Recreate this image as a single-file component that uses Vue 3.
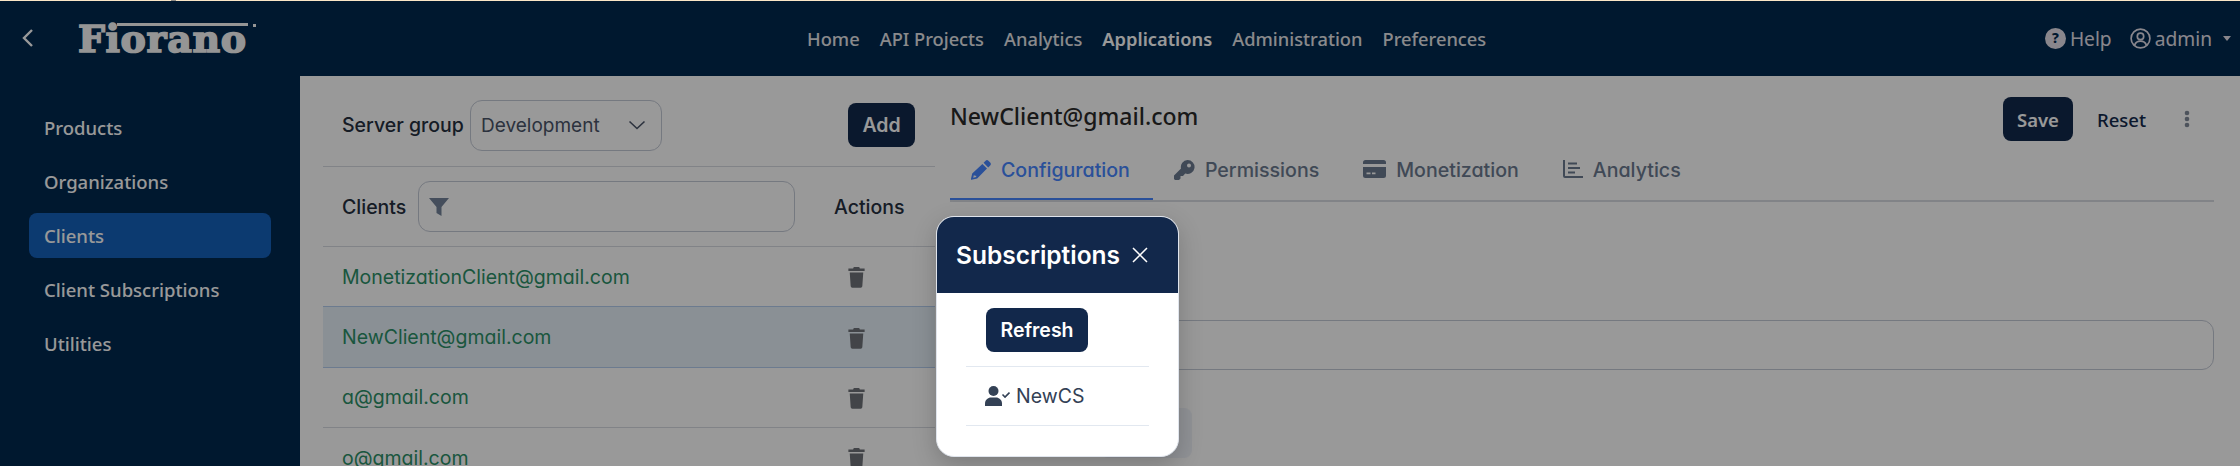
<script setup>
const navLinks = [
  { label: "Home" },
  { label: "API Projects" },
  { label: "Analytics" },
  { label: "Applications", active: true },
  { label: "Administration" },
  { label: "Preferences" }
];

const sideLinks = [
  { label: "Products" },
  { label: "Organizations" },
  { label: "Clients", active: true },
  { label: "Client Subscriptions" },
  { label: "Utilities" }
];

const clients = [
  { email: "MonetizationClient@gmail.com" },
  { email: "NewClient@gmail.com", selected: true },
  { email: "a@gmail.com" },
  { email: "o@gmail.com" }
];

const trashPath = "M5 1.500h4l.5 1H13v2H1v-2h3.500zM2 5.500h10l-.7 10.200a1.200 1.200 0 0 1-1.200 1.100H3.900a1.200 1.200 0 0 1-1.200-1.100z";
</script>

<template>
  <div class="page">
    <div class="top-line"><i></i></div>
    <header class="topbar">
      <button type="button" class="back">
        <svg width="14" height="22" viewBox="0 0 14 22"><path d="M11 3 3 11l8 8" fill="none" stroke="currentColor" stroke-width="2.400" /></svg>
      </button>
      <div class="logo"><span>Fiorano</span><i></i><b></b></div>
      <nav class="nav">
        <a v-for="link in navLinks" :key="link.label" :class="{ active: link.active }">{{ link.label }}</a>
      </nav>
      <div class="user">
        <span class="user-item">
          <svg width="21" height="21" viewBox="0 0 21 21"><circle cx="10.500" cy="10.500" r="10.500" fill="currentColor" /><text x="10.500" y="15" text-anchor="middle" class="q">?</text></svg>
          Help
        </span>
        <span class="user-item admin">
          <svg width="21" height="21" viewBox="0 0 21 21" fill="none" stroke="currentColor" stroke-width="1.700"><circle cx="10.500" cy="10.500" r="9.400" /><circle cx="10.500" cy="8.400" r="3.200" /><path d="M4.600 17.200c1-3 3.200-4 5.900-4s4.900 1 5.900 4" /></svg>
          admin
          <i class="caret"></i>
        </span>
      </div>
    </header>

    <div class="body">
      <aside class="sidebar">
        <a v-for="link in sideLinks" :key="link.label" :class="{ active: link.active }">{{ link.label }}</a>
      </aside>

      <main class="main">
        <section class="clients">
          <div class="group-row">
            <label>Server group</label>
            <div class="select">
              Development
              <svg width="18" height="10" viewBox="0 0 18 10"><path d="m1.500 1.500 7.500 7 7.500-7" fill="none" stroke="currentColor" stroke-width="1.600" /></svg>
            </div>
            <button type="button" class="btn add">Add</button>
          </div>
          <div class="head-row">
            <label>Clients</label>
            <div class="filter">
              <svg width="20" height="18" viewBox="0 0 20 18"><path d="M0 0h20l-7.500 9v9l-5-3V9z" fill="currentColor" /></svg>
            </div>
            <span class="actions">Actions</span>
          </div>
          <div
            v-for="client in clients"
            :key="client.email"
            class="client-row"
            :class="{ selected: client.selected }"
          >
            <span>{{ client.email }}</span>
            <svg width="21" height="23" viewBox="0 0 14 17"><path :d="trashPath" fill="currentColor" /></svg>
          </div>
        </section>

        <section class="detail">
          <div class="detail-head">
            <h2>NewClient@gmail.com</h2>
            <div class="detail-actions">
              <button type="button" class="btn save">Save</button>
              <button type="button" class="reset">Reset</button>
              <svg width="6" height="18" viewBox="0 0 6 18"><circle cx="3" cy="3" r="2.300" /><circle cx="3" cy="9" r="2.300" /><circle cx="3" cy="15" r="2.300" /></svg>
            </div>
          </div>
          <div class="tabs">
            <a class="tab active">
              <svg width="20" height="20" viewBox="0 0 20 20"><path fill-rule="evenodd" d="M14.600.8a2 2 0 0 1 2.800 0l1.800 1.800a2 2 0 0 1 0 2.800l-2 2L12.600 2.800zM11.400 4l4.600 4.600-9.800 9.800-5.700 1.300a.5.500 0 0 1-.6-.6l1.300-5.700zM3 14.800l-.8 3 3-.8v-1.200H3.600z" fill="currentColor" /></svg>
              Configuration
            </a>
            <a class="tab">
              <svg width="21" height="20" viewBox="0 0 21 20"><path fill-rule="evenodd" d="M13.500 0a7 7 0 1 1-2.300 13.600L9 16H6.500v2.500L5 20H1l-1-1v-3.500l7-7A7 7 0 0 1 13.500 0zm1.500 3.500a2 2 0 1 0 0 4 2 2 0 0 0 0-4z" fill="currentColor" /></svg>
              Permissions
            </a>
            <a class="tab">
              <svg width="23" height="18" viewBox="0 0 23 18"><path fill-rule="evenodd" d="M2.500 0h18A2.500 2.500 0 0 1 23 2.500V4H0V2.500A2.500 2.500 0 0 1 2.500 0zM0 7h23v8.500a2.500 2.500 0 0 1-2.500 2.500h-18A2.500 2.500 0 0 1 0 15.500zm3.500 5.500v1.700h4v-1.700zm5.500 0v1.700h3.500v-1.700z" fill="currentColor" /></svg>
              Monetization
            </a>
            <a class="tab">
              <svg width="20" height="18" viewBox="0 0 20 18"><path d="M0 0h2v16h18v2H2a2 2 0 0 1-2-2zM5 2.500h9v2H5zm0 4.500h12v2H5zm0 4.500h7v2H5z" fill="currentColor" /></svg>
              Analytics
            </a>
          </div>
          <div class="field"></div>
        </section>
      </main>
    </div>

    <div class="backdrop">
      <div class="ghost-box"></div>
      <div class="modal">
        <div class="modal-head">
          <span>Subscriptions</span>
          <svg width="16" height="16" viewBox="0 0 16 16"><path d="m1 1 14 14M15 1 1 15" stroke="currentColor" stroke-width="1.500" fill="none" /></svg>
        </div>
        <div class="modal-body">
          <div class="modal-row refresh-row">
            <button type="button" class="refresh">Refresh</button>
          </div>
          <div class="modal-row sub-row">
            <svg width="25" height="20" viewBox="0 0 25 20"><circle cx="8.500" cy="5" r="5" fill="currentColor" /><path d="M0 20v-2.500C0 14 3 11.500 6 11.500h5c3 0 6 2.500 6 6V20z" fill="currentColor" /><path d="m17.500 8.500 2.500 2.500 4.500-4.500" fill="none" stroke="currentColor" stroke-width="1.600" /></svg>
            <span>NewCS</span>
          </div>
        </div>
      </div>
    </div>
  </div>
</template>

<style>
html,
body {
  margin: 0;
  background: #fff;
}
</style>

<style scoped>
.page {
  position: relative;
  width: 2240px;
  height: 466px;
  overflow: hidden;
  display: flex;
  flex-direction: column;
  font-family: Inter, "Noto Sans", sans-serif;
  color: #26303f;
}

.top-line {
  position: absolute;
  top: 0;
  left: 0;
  right: 0;
  height: 1px;
  background: #fbe6c6;
  z-index: 30;
}

.top-line i {
  position: absolute;
  left: 171px;
  width: 5px;
  height: 1px;
  background: #8f8a84;
}

.topbar {
  flex: 0 0 76px;
  display: flex;
  align-items: center;
  background: #00284f;
  color: #e6e6ea;
  position: relative;
}

.back {
  background: none;
  border: 0;
  color: #fff;
  padding: 0;
  margin-left: 21px;
  display: flex;
}

.logo {
  margin-left: 43px;
  position: relative;
  width: 174px;
  height: 30px;
  color: #f8f8f8;
  font-family: "DejaVu Serif", serif;
  font-weight: 700;
  font-size: 38px;
  line-height: 30px;
  letter-spacing: 0.6px;
}

.logo span {
  display: block;
  margin-top: 1px;
  -webkit-text-stroke: 1.600px #f8f8f8;
}

.logo i {
  position: absolute;
  left: 39px;
  right: 4px;
  top: 0;
  height: 3px;
  background: #f8f8f8;
}

.logo b {
  position: absolute;
  left: 175px;
  top: 1px;
  width: 3px;
  height: 3px;
  background: #f8f8f8;
}

.nav {
  position: absolute;
  left: 807px;
  display: flex;
  gap: 20px;
  font-family: "Noto Sans", sans-serif;
  font-size: 18.300px;
  font-weight: 500;
}

.nav a.active {
  color: #fff;
  font-weight: 600;
}

.user {
  margin-left: auto;
  margin-right: 9px;
  display: flex;
  gap: 18px;
  font-family: "Noto Sans", sans-serif;
  font-size: 19.200px;
  color: #e4e0ea;
}

.user-item {
  display: flex;
  align-items: center;
  gap: 4px;
}

.q {
  font-size: 14px;
  font-weight: 800;
  fill: #00284f;
}

.caret {
  width: 0;
  height: 0;
  border: 4.500px solid transparent;
  border-top: 5px solid currentColor;
  border-bottom: 0;
  margin-left: 7px;
}

.body {
  flex: 1;
  display: flex;
  min-height: 0;
}

.sidebar {
  flex: 0 0 300px;
  background: #00284f;
  color: #fff;
  box-sizing: border-box;
  padding: 29px 29px 0;
  display: flex;
  flex-direction: column;
  gap: 9px;
  font-family: "Noto Sans", sans-serif;
  font-size: 18.500px;
  font-weight: 500;
}

.sidebar a {
  height: 45px;
  display: flex;
  align-items: center;
  padding-left: 15px;
  border-radius: 8px;
}

.sidebar a.active {
  background: #1561bb;
}

.main {
  flex: 1;
  display: flex;
  min-width: 0;
}

.clients {
  flex: 0 0 612px;
  margin-left: 23px;
  font-size: 19.500px;
}

.group-row,
.head-row {
  display: flex;
  align-items: center;
  padding-left: 19px;
  border-bottom: 1px solid #d8dbe2;
  box-sizing: border-box;
  font-weight: 500;
}

.group-row {
  height: 91px;
  padding-top: 8px;
}

.head-row {
  height: 80px;
}

.group-row label {
  width: 128px;
  white-space: nowrap;
}

.select {
  width: 192px;
  height: 51px;
  box-sizing: border-box;
  border: 1px solid #c4cad6;
  border-radius: 12px;
  padding: 0 15px 0 10px;
  display: flex;
  align-items: center;
  justify-content: space-between;
  font-size: 19px;
  font-weight: 400;
  color: #4a5468;
}

.btn {
  height: 44px;
  border: 0;
  border-radius: 8px;
  background: #12284b;
  color: #fff;
  font-family: inherit;
  font-size: 19.500px;
  font-weight: 600;
  padding: 0;
}

.add {
  width: 67px;
  margin-left: 186px;
}

.head-row label {
  width: 76px;
}

.filter {
  width: 377px;
  height: 51px;
  box-sizing: border-box;
  border: 1px solid #c4cad6;
  border-radius: 12px;
  display: flex;
  align-items: center;
  padding-left: 10px;
  color: #738399;
}

.actions {
  margin-left: 39px;
}

.client-row {
  height: 60.400px;
  box-sizing: border-box;
  border-bottom: 1px solid #d8dbe2;
  display: flex;
  align-items: center;
  justify-content: space-between;
  padding: 0 68px 0 19px;
  color: #2c9068;
  font-feature-settings: "cv11";
}

.client-row svg {
  color: #6f7278;
}

.client-row.selected {
  background: #e6f1f9;
  border-bottom-color: #b5cdee;
  box-shadow: 0 -1px 0 #b5cdee;
}

.detail {
  flex: 1;
  margin-left: 15px;
  margin-right: 26px;
  min-width: 0;
}

.detail-head {
  height: 80px;
  display: flex;
  align-items: center;
  justify-content: space-between;
}

.detail-head h2 {
  margin: 0;
  font-family: "Noto Sans", sans-serif;
  font-size: 23px;
  font-weight: 500;
  color: #2a2a2a;
}

.detail-actions {
  display: flex;
  align-items: center;
  margin-top: 6px;
  margin-right: 24px;
  font-family: "Noto Sans", sans-serif;
}

.detail-actions svg {
  fill: #808a99;
  margin-left: 38px;
}

.save {
  width: 70px;
  font-size: 18.500px;
  font-family: "Noto Sans", sans-serif;
}

.reset {
  margin-left: 24px;
  border: 0;
  padding: 0;
  background: none;
  font-family: inherit;
  font-size: 18.500px;
  font-weight: 500;
  color: #12284b;
}

.tabs {
  display: flex;
  height: 44px;
  border-bottom: 2px solid #d8dbe2;
  font-size: 19.600px;
  font-weight: 500;
  font-feature-settings: "cv11";
}

.tab {
  display: flex;
  align-items: flex-start;
  gap: 10px;
  padding: 2px 23px 0 21px;
  height: 44px;
  box-sizing: border-box;
  color: #6b7a90;
}

.tab svg {
  margin-top: 2px;
}

.tab.active {
  color: #4786ff;
  border-bottom: 2px solid #4786ff;
}

.field {
  margin-top: 118px;
  height: 50px;
  box-sizing: border-box;
  border: 1px solid #c4cad6;
  border-radius: 12px;
}

.backdrop {
  position: absolute;
  inset: 0;
  background: rgba(0, 0, 0, 0.4);
}

.ghost-box {
  position: absolute;
  left: 1100px;
  top: 408px;
  width: 92px;
  height: 50px;
  border-radius: 8px;
  background: rgba(130, 135, 145, 0.35);
}

.modal {
  position: absolute;
  left: 936px;
  top: 216px;
  width: 243px;
  height: 241px;
  box-sizing: border-box;
  background: #fff;
  border: 1px solid #dfe4ec;
  border-radius: 18px;
  overflow: hidden;
  box-shadow: 0 8px 24px rgba(0, 0, 0, 0.2);
}

.modal-head {
  height: 76px;
  background: #12284b;
  color: #fff;
  display: flex;
  align-items: center;
  gap: 12px;
  padding-left: 19px;
  font-size: 24.500px;
  font-weight: 600;
}

.modal-body {
  margin: 0 29px;
}

.modal-row {
  border-bottom: 1px solid #e2e8f0;
  display: flex;
  align-items: center;
}

.refresh-row {
  height: 74px;
  padding-left: 20px;
  box-sizing: border-box;
}

.refresh {
  width: 102px;
  height: 44px;
  border: 0;
  border-radius: 8px;
  background: #12284b;
  color: #fff;
  font-family: inherit;
  font-size: 19.500px;
  font-weight: 600;
  padding: 0;
}

.sub-row {
  height: 59px;
  box-sizing: border-box;
  padding-left: 19px;
  gap: 6px;
  color: #334155;
  font-size: 19.500px;
}
</style>
